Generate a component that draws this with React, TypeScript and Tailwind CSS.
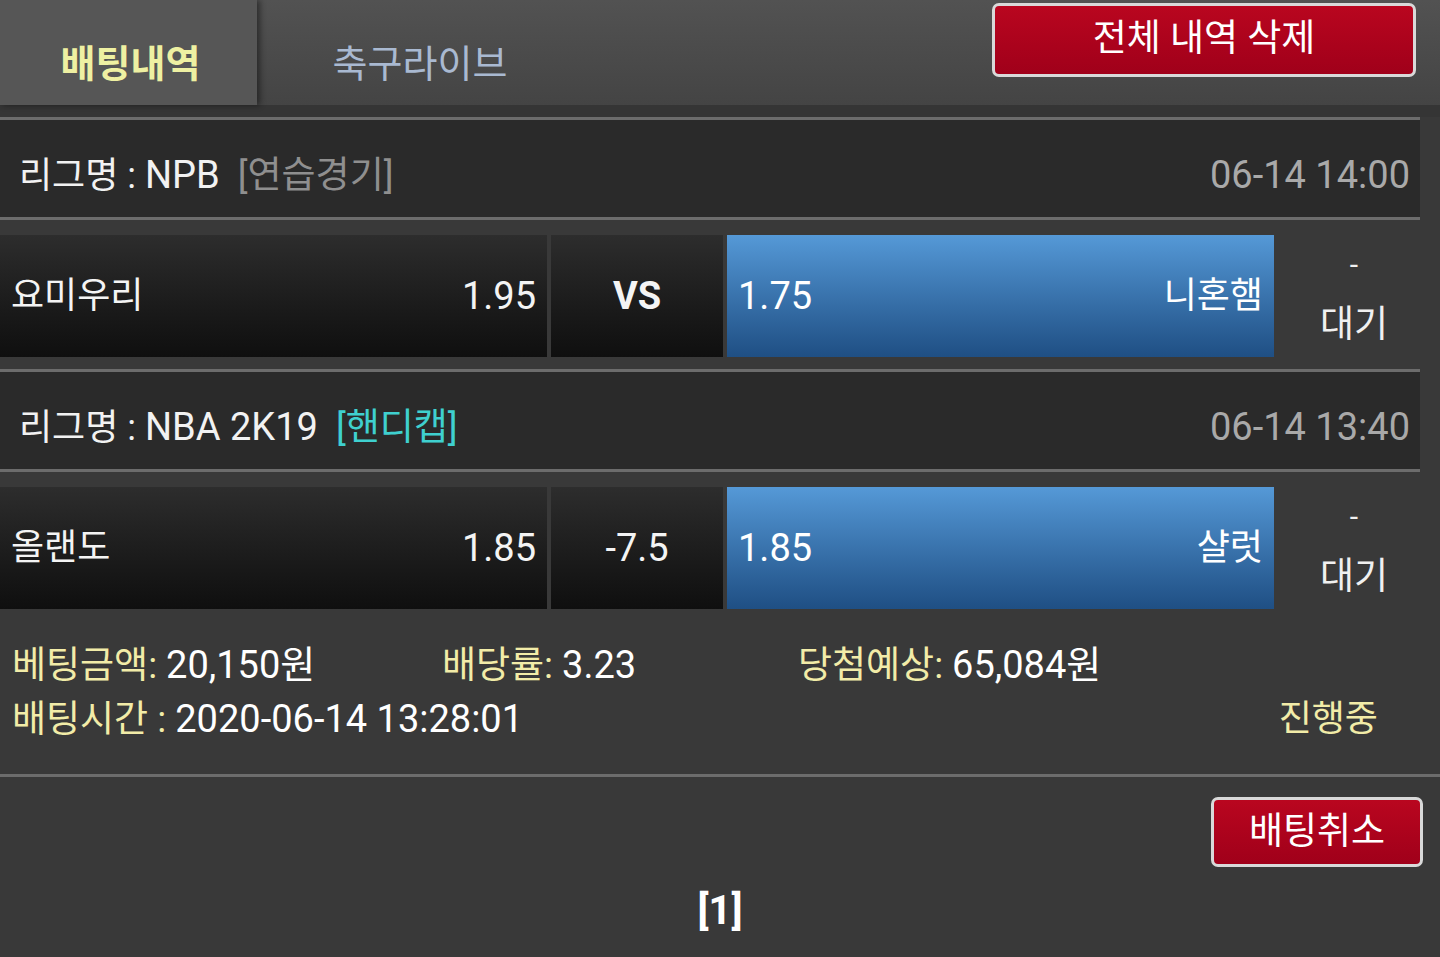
const font = { fontFamily: 'Roboto, "Noto Sans CJK KR", sans-serif' };

function LeagueRow({ name, code, tag, tagColor, time }: { name: string; code: string; tag: string; tagColor: string; time: string }) {
  return (
    <>
      <div className="h-[3px] bg-[#6c6c6c]" />
      <div className="h-[97px] bg-[#2a2a2a] flex items-center justify-between pl-[19px] pr-[10px] pt-[14px]">
        <div className="flex items-center gap-[18px]">
          <span className="text-[#f2f2f2]">
            {name} <span className="text-[38px]">{code}</span>
          </span>
          <span className={`text-[37px] ${tagColor}`}>{tag}</span>
        </div>
        <span className="text-[#a9a9a9] text-[38px]">{time}</span>
      </div>
      <div className="h-[3px] bg-[#6c6c6c]" />
    </>
  );
}

function MatchRow({ home, homeOdd, mid, midBold, awayOdd, away, last }: { home: string; homeOdd: string; mid: string; midBold?: boolean; awayOdd: string; away: string; last?: boolean }) {
  return (
    <div className={`flex h-[122px] mt-[15px] ${last ? "" : "mb-[12px]"}`}>
      <div className="w-[547px] bg-gradient-to-b from-[#2d2d2d] to-[#0f0f0f] flex items-center justify-between pl-[11px] pr-[11px] text-[#f4f4f4]">
        <span>{home}</span>
        <span className="text-[38px]">{homeOdd}</span>
      </div>
      <div className={`ml-[4px] w-[172px] bg-gradient-to-b from-[#2d2d2d] to-[#0f0f0f] flex items-center justify-center text-[#f4f4f4] text-[38px] ${midBold ? "font-bold" : ""}`}>
        {mid}
      </div>
      <div className="ml-[4px] w-[547px] bg-gradient-to-b from-[#5599d7] to-[#1f4f84] flex items-center justify-between pl-[11px] pr-[11px] text-white">
        <span className="text-[38px]">{awayOdd}</span>
        <span>{away}</span>
      </div>
      <div className="flex-1 flex flex-col items-center justify-center pl-[14px] text-[#f0f0f0] leading-none">
        <span className="text-[30px] mb-[26px]">-</span>
        <span className="text-[37px]">대기</span>
      </div>
    </div>
  );
}

function Info({ label, value }: { label: string; value: string }) {
  return (
    <span>
      <span className="text-[#f2eca8] text-[37px]">{label}</span> <span className="text-white text-[38px]">{value}</span>
    </span>
  );
}

export default function App() {
  return (
    <div className="w-[1440px] h-[957px] bg-[#393939] text-[36px] overflow-hidden" style={font}>
      <header className="h-[105px] bg-gradient-to-b from-[#525252] to-[#444444] flex items-stretch">
        <div className="w-[257px] bg-[#565656] shadow-[3px_0_6px_rgba(0,0,0,0.45)] flex items-center justify-center pt-[24px] pl-[4px] text-[#eef0a2] font-bold text-[38px]">
          배팅내역
        </div>
        <div className="w-[326px] flex items-center justify-center pt-[24px] text-[#a9b9d1] text-[38px]">
          축구라이브
        </div>
        <div className="flex-1 flex justify-end pr-[24px] pt-[3px]">
          <button className="w-[424px] h-[74px] rounded-[7px] border-[3px] border-[#d9d9d9] bg-gradient-to-b from-[#b9061f] to-[#a0001a] text-white text-[37px] flex items-center justify-center pb-[2px]">
            전체 내역 삭제
          </button>
        </div>
      </header>
      <div className="h-[12px] bg-[#353535]" />

      <div className="w-[1420px]">
        <LeagueRow name="리그명 :" code="NPB" tag="[연습경기]" tagColor="text-[#8f8f8f]" time="06-14 14:00" />
        <MatchRow home="요미우리" homeOdd="1.95" mid="VS" midBold awayOdd="1.75" away="니혼햄" />
        <LeagueRow name="리그명 :" code="NBA 2K19" tag="[핸디캡]" tagColor="text-[#3fd0cf]" time="06-14 13:40" />
        <MatchRow home="올랜도" homeOdd="1.85" mid="-7.5" awayOdd="1.85" away="샬럿" last />
      </div>

      <div className="h-[165px] pl-[12px] pr-[62px] pt-[30px] leading-[53px]">
        <div className="flex">
          <div className="w-[430px]"><Info label="베팅금액:" value="20,150원" /></div>
          <div className="w-[356px]"><Info label="배당률:" value="3.23" /></div>
          <div><Info label="당첨예상:" value="65,084원" /></div>
        </div>
        <div className="flex justify-between">
          <Info label="배팅시간 :" value="2020-06-14 13:28:01" />
          <span className="text-[#f2eca8]">진행중</span>
        </div>
      </div>
      <div className="h-[3px] bg-[#6c6c6c]" />

      <div className="flex justify-end pr-[17px] pt-[20px]">
        <button className="w-[212px] h-[70px] rounded-[7px] border-[3px] border-[#d9d9d9] bg-gradient-to-b from-[#b9061f] to-[#a0001a] text-white text-[37px] flex items-center justify-center">
          배팅취소
        </button>
      </div>
      <div className="text-center text-white font-bold text-[40px] mt-[14px]">[1]</div>
    </div>
  );
}
